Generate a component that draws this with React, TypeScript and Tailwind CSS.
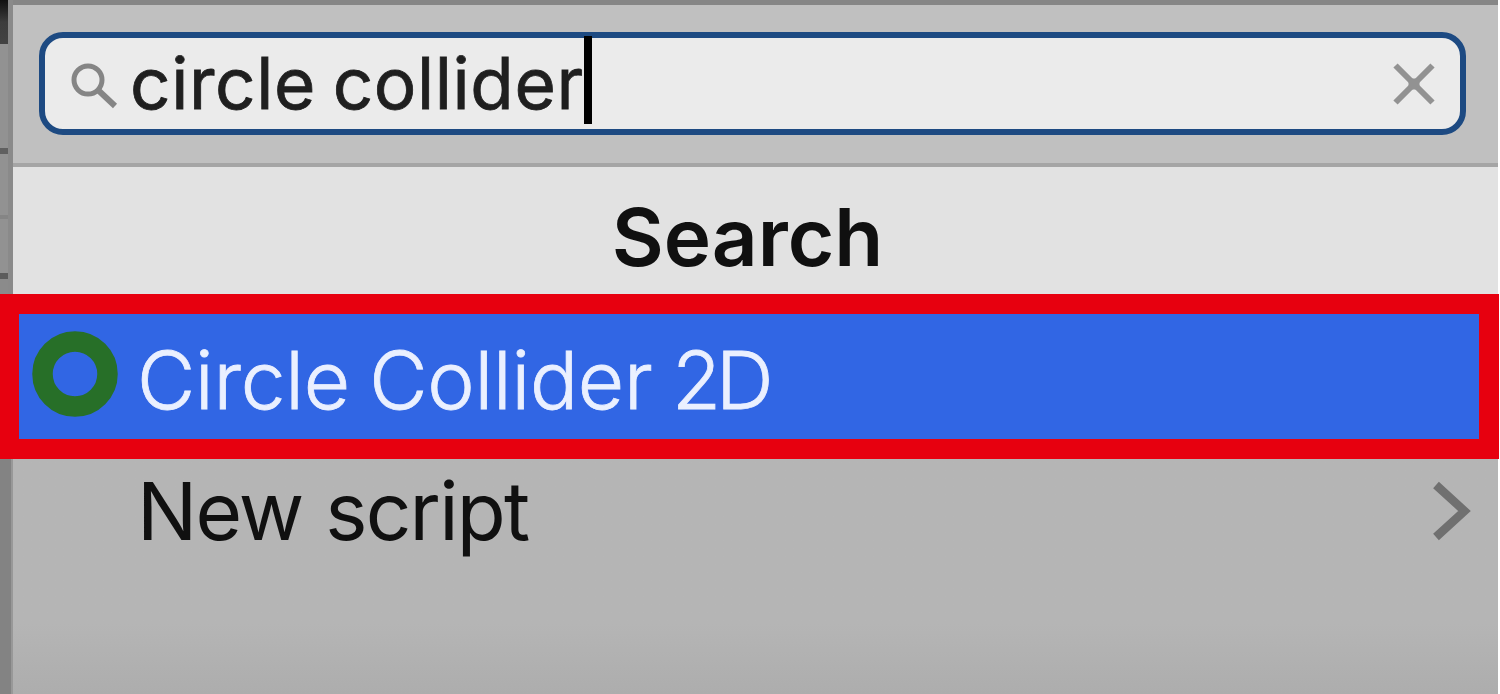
function SearchIcon() {
  return (
    <svg className="h-[50px] w-[50px] shrink-0" viewBox="0 0 50 50" fill="none" stroke="#858585" strokeWidth="5">
      <circle cx="19" cy="21" r="14" />
      <path d="M29 31L46 47" strokeWidth="6" />
    </svg>
  );
}

function ClearIcon() {
  return (
    <svg className="h-[44px] w-[44px] shrink-0" viewBox="0 0 44 44" fill="none" stroke="#929292" strokeWidth="6">
      <path d="M3.5 3.5L40.5 40.5M40.5 3.5L3.5 40.5" />
      <rect x="16.5" y="16.5" width="11" height="11" fill="#929292" stroke="none" />
    </svg>
  );
}

function ChevronIcon() {
  return (
    <svg className="h-[60px] w-[40px] shrink-0" viewBox="0 0 40 60" fill="none" stroke="#707070" strokeWidth="8.5">
      <path d="M4 4L32.5 30L4 56" />
    </svg>
  );
}

function ColliderIcon() {
  return (
    <svg className="h-[86px] w-[86px] shrink-0" viewBox="0 0 86 86" fill="none">
      <circle cx="43" cy="43" r="32.5" stroke="#276f28" strokeWidth="20.5" />
    </svg>
  );
}

function UpperEdge() {
  return (
    <div className="flex w-[13px] shrink-0 flex-col border-r-[5px] border-[#8a8a8a] bg-[#929292]">
      <div className="h-[44px] bg-gradient-to-b from-[#111111] via-[#3d3d3d] to-[#434343]" />
      <div className="mt-[104px] h-[6px] bg-[#606060]" />
      <div className="mt-[61px] h-[4px] bg-[#858585]" />
      <div className="mt-[54px] h-[6px] bg-[#5c5c5c]" />
      <div className="flex-1 bg-[#8b8b8b]" />
    </div>
  );
}

export default function App() {
  return (
    <div className="flex h-[694px] w-[1500px] flex-col overflow-hidden bg-white font-['Inter',sans-serif] text-[#101010]">
      <div className="flex h-[294px] w-[1498px]">
        <UpperEdge />
        <div className="flex flex-1 flex-col">
          <div className="h-[167px] border-t-[5px] border-b-[4px] border-t-[#868686] border-b-[#a5a5a5] bg-[#c0c0c0] pt-[27px] pr-[32px] pl-[26px]">
            <div className="flex h-[103px] items-center rounded-[24px] border-[6px] border-[#1d4a82] bg-[#ebebeb] pr-[24px] pl-[24px]">
              <SearchIcon />
              <span className="ml-[11px] text-[71px] leading-none tracking-[0.6px] whitespace-pre text-[#1f1f1f] [-webkit-text-stroke:0.8px_#1f1f1f] [word-spacing:-4px]">circle collider</span>
              <span className="h-[88px] w-[8px] shrink-0 -translate-y-[4px] bg-black" />
              <span className="flex-1" />
              <ClearIcon />
            </div>
          </div>
          <div className="flex flex-1 justify-center bg-[#e2e2e2] pt-[29px] pr-[16px]">
            <span className="text-[80px] leading-[82px] font-semibold">Search</span>
          </div>
        </div>
      </div>

      <div className="flex h-[165px] w-[1499px] items-center border-x-[20px] border-y-[20px] border-l-[19px] border-[#e7000f] bg-[#3166e4] pl-[13px]">
        <div className="-mt-[6px]">
          <ColliderIcon />
        </div>
        <span className="mt-[7px] ml-[19px] text-[80px] leading-none font-light tracking-[-0.2px] whitespace-pre text-[#eaf0ff] [-webkit-text-stroke:0.8px_#eaf0ff] [word-spacing:-3px]">
          Circle Collider <span className="tracking-[-5px]">2D</span>
        </span>
      </div>

      <div className="flex h-[235px] w-[1498px]">
        <div className="w-[13px] shrink-0 border-r-[2px] border-[#989898] bg-[#838383]" />
        <div className="flex-1 bg-gradient-to-b from-[#b5b5b5] from-70% to-[#adadad]">
          <div className="flex h-[104px] items-center justify-between pr-[26px] pl-[124px]">
            <span className="text-[80px] leading-none tracking-[-1.8px] whitespace-pre [word-spacing:2px]">New script</span>
            <ChevronIcon />
          </div>
        </div>
      </div>
    </div>
  );
}
